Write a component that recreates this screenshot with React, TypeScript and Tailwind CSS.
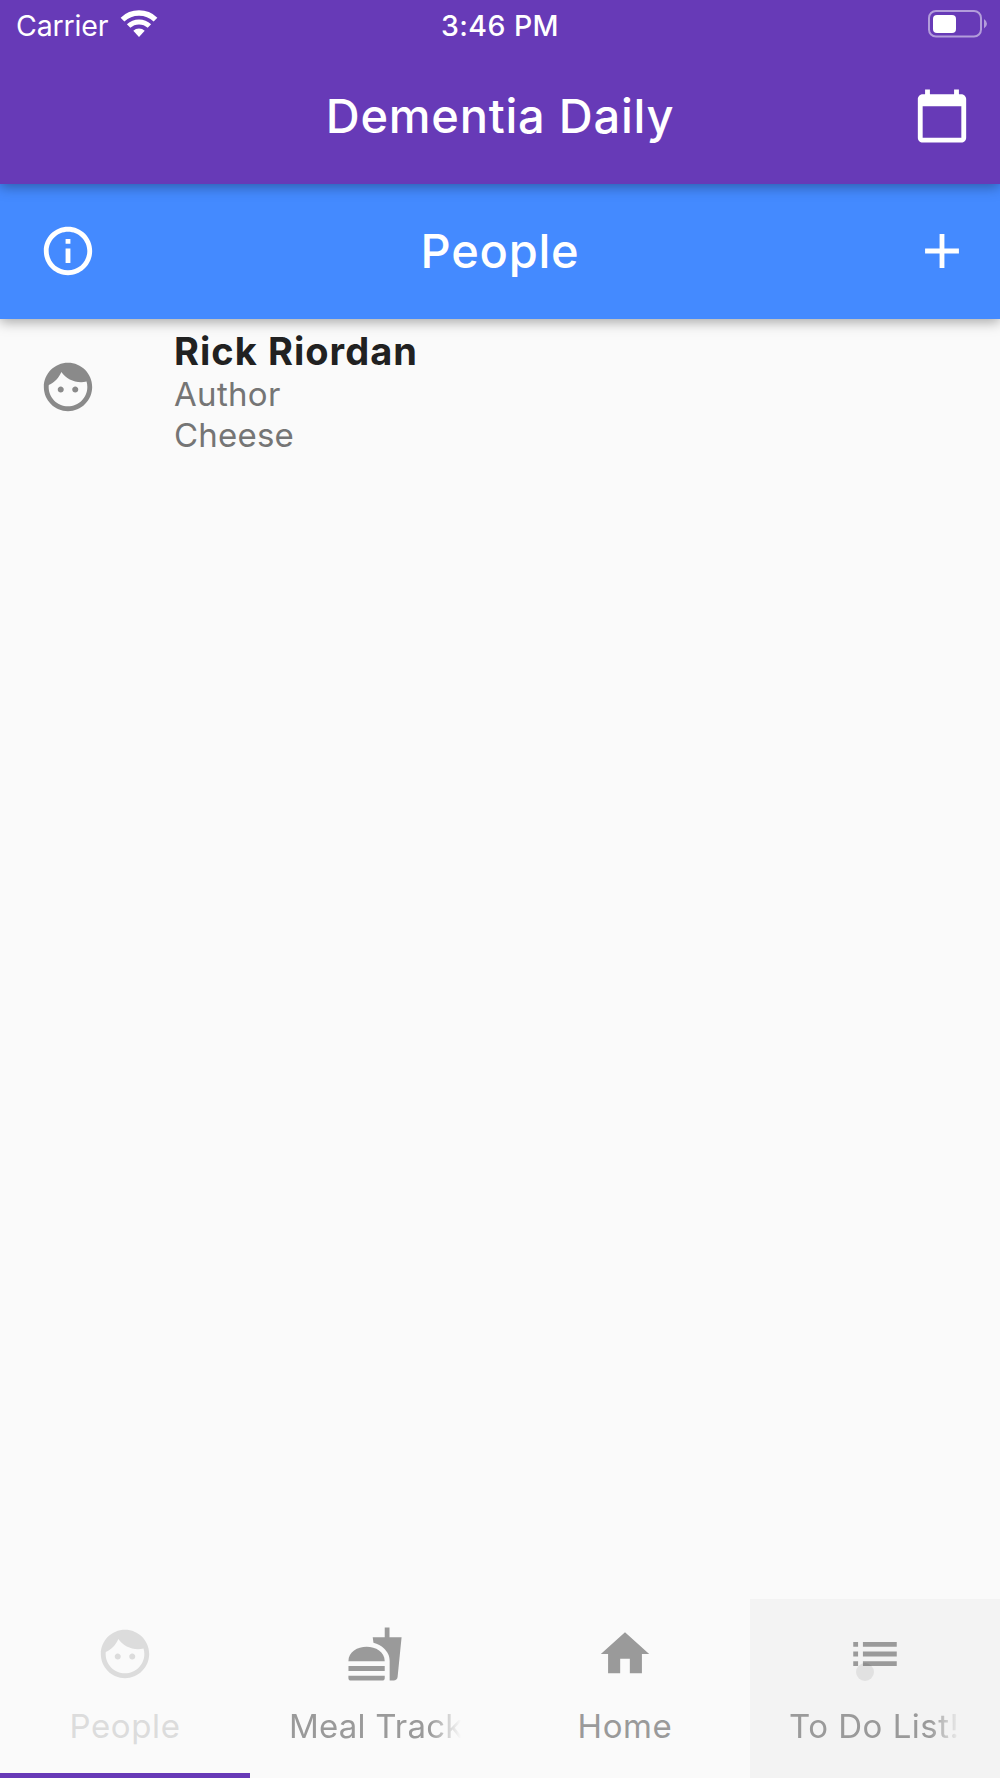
import type { ReactNode } from "react";
import clsx from "clsx";

const icons = {
  calendar:
    "M20 3h-1V1h-2v2H7V1H5v2H4c-1.1 0-2 .9-2 2v16c0 1.1.9 2 2 2h16c1.1 0 2-.9 2-2V5c0-1.1-.9-2-2-2zm0 18H4V8h16v13z",
  info: "M11 7h2v2h-2zm0 4h2v6h-2zm1-9C6.48 2 2 6.48 2 12s4.48 10 10 10 10-4.48 10-10S17.52 2 12 2zm0 18c-4.41 0-8-3.59-8-8s3.59-8 8-8 8 3.59 8 8-3.59 8-8 8z",
  add: "M19 13h-6v6h-2v-6H5v-2h6V5h2v6h6v2z",
  face: "M9 11.75c-.69 0-1.25.56-1.25 1.25s.56 1.25 1.25 1.25 1.25-.56 1.25-1.25-.56-1.25-1.25-1.25zm6 0c-.69 0-1.25.56-1.25 1.25s.56 1.25 1.25 1.25 1.25-.56 1.25-1.25-.56-1.25-1.25-1.25zM12 2C6.48 2 2 6.48 2 12s4.48 10 10 10 10-4.48 10-10S17.52 2 12 2zm0 18c-4.41 0-8-3.59-8-8 0-.29.02-.58.05-.86 2.36-1.05 4.23-2.98 5.21-5.37C11.07 8.33 14.05 10 17.42 10c.78 0 1.53-.09 2.25-.26.21.71.33 1.47.33 2.26 0 4.41-3.59 8-8 8z",
  fastfood:
    "M18.06 22.99h1.66c.84 0 1.53-.64 1.63-1.46L23 5.05h-5V1h-1.97v4.05h-4.97l.3 2.34c1.71.47 3.31 1.32 4.27 2.26 1.44 1.42 2.43 2.89 2.43 5.29v8.05zM1 21.99V21h15.03v.99c0 .55-.45 1-1.01 1H2.01c-.56 0-1.01-.45-1.01-1zm15.03-7c0-8-15.03-8-15.03 0h15.03zM1.02 17h15v2h-15z",
  home: "M10 20v-6h4v6h5v-8h3L12 3 2 12h3v8z",
  list: "M3 13h2v-2H3v2zm0 4h2v-2H3v2zm0-8h2V7H3v2zm4 4h14v-2H7v2zm0 4h14v-2H7v2zM7 7v2h14V7H7z",
};

type IconName = keyof typeof icons;

type Tab = {
  label: string;
  icon: IconName;
  labelClass: string;
  selected?: boolean;
  pressed?: boolean;
  fade?: boolean;
};

const people = [{ name: "Rick Riordan", relation: "Author", notes: "Cheese" }];

const tabs: Tab[] = [
  { label: "People", icon: "face", labelClass: "tracking-[0.6px]", selected: true },
  { label: "Meal Tracker", icon: "fastfood", labelClass: "tracking-[0.2px]", fade: true },
  { label: "Home", icon: "home", labelClass: "tracking-[0.6px]" },
  { label: "To Do List!", icon: "list", labelClass: "tracking-[0.5px]", pressed: true, fade: true },
];

export default function App() {
  return (
    <div className="flex h-[1778px] w-[1000px] flex-col overflow-hidden bg-[#fafafa] font-['Inter','Liberation_Sans',sans-serif]">
      <header className="relative z-20 h-[183.6px] bg-[#673ab7] text-white shadow-[0_3px_12px_rgba(0,0,0,0.34)]">
        <StatusBar />
        <AppBar title="Dementia Daily" trailing={<Icon name="calendar" />} />
      </header>
      <div className="relative z-10 h-[135.2px] bg-[#448aff] text-white shadow-[0_3px_12px_rgba(0,0,0,0.34)]">
        <AppBar title="People" leading={<Icon name="info" />} trailing={<Icon name="add" />} />
      </div>

      <main className="flex-1">
        {people.map((person) => (
          <div key={person.name} className="flex h-[136px] items-center pl-[39px]">
            <Icon name="face" className="text-[#8a8a8a]" />
            <div className="ml-[77px] pt-[11px]">
              <p className="text-[38px] leading-[46px] font-bold tracking-[1.05px] text-[#212121]">{person.name}</p>
              <p className="text-[33px] leading-[41px] tracking-[0.3px] text-[#757575]">{person.relation}</p>
              <p className="text-[33px] leading-[41px] tracking-[0.2px] text-[#757575]">{person.notes}</p>
            </div>
          </div>
        ))}
      </main>

      <nav className="flex h-[179px]">
        {tabs.map((tab) => (
          <TabButton key={tab.label} tab={tab} />
        ))}
      </nav>
    </div>
  );
}

function StatusBar() {
  return (
    <div className="grid h-12 grid-cols-3 items-center px-[13px]">
      <div className="flex items-center pl-[3px]">
        <span className="w-[104px] pt-[4px] text-[28.5px] leading-none tracking-[-0.15px]">Carrier</span>
        <svg width="38" height="28" viewBox="0 0 38 28" fill="none" stroke="currentColor">
          <path d="M2.5 9.6a24 24 0 0 1 33 0" strokeWidth="5.4" />
          <path d="M8.6 16a15.2 15.2 0 0 1 20.8 0" strokeWidth="5" />
          <path d="M13.3 20.7a8.6 8.6 0 0 1 11.4 0L19 27z" fill="currentColor" stroke="none" />
        </svg>
      </div>
      <span className="pt-[4px] text-center text-[28.5px] leading-none font-medium tracking-[0.45px]">3:46 PM</span>
      <svg className="justify-self-end" width="59" height="28" viewBox="0 0 59 28">
        <rect x="1" y="1" width="52" height="25.5" rx="7" fill="none" stroke="white" strokeOpacity=".5" strokeWidth="2" />
        <rect x="5" y="5" width="23" height="18" rx="4" fill="white" />
        <path d="M56 9q3 2 3 4.75T56 18.5z" fill="white" fillOpacity=".5" />
      </svg>
    </div>
  );
}

function AppBar({ title, leading, trailing }: { title: string; leading?: ReactNode; trailing?: ReactNode }) {
  return (
    <div className="grid h-[135px] grid-cols-[58px_1fr_68px] items-center pr-[29px] pl-[39px]">
      <div>{leading}</div>
      <h1 className="text-center text-[47px] leading-[58px] font-medium tracking-[0.75px]">{title}</h1>
      <div className="flex justify-end">{trailing}</div>
    </div>
  );
}

function TabButton({ tab }: { tab: Tab }) {
  return (
    <button
      className={clsx(
        "relative flex w-[250px] flex-col items-center px-[39px] pt-[26px]",
        tab.selected ? "text-[#dcdcdc]" : "text-[#9a9a9a]",
        tab.pressed && "bg-[#f3f3f3]",
      )}
    >
      <Icon name={tab.icon} />
      {tab.pressed && <span className="absolute top-[64px] left-[106px] size-[18px] rounded-full bg-black/7" />}
      <span
        className={clsx(
          "mt-[22px] overflow-hidden text-[33px] leading-[42px] whitespace-nowrap",
          tab.labelClass,
          tab.fade && "w-full text-left [mask-image:linear-gradient(to_right,black_82%,transparent)]",
        )}
      >
        {tab.label}
      </span>
      {tab.selected && <span className="absolute inset-x-0 bottom-0 h-[5px] bg-[#673ab7]" />}
    </button>
  );
}

function Icon({ name, className }: { name: IconName; className?: string }) {
  return (
    <svg className={clsx("size-[58px] shrink-0", className)} viewBox="0 0 24 24" fill="currentColor">
      <path d={icons[name]} />
    </svg>
  );
}
